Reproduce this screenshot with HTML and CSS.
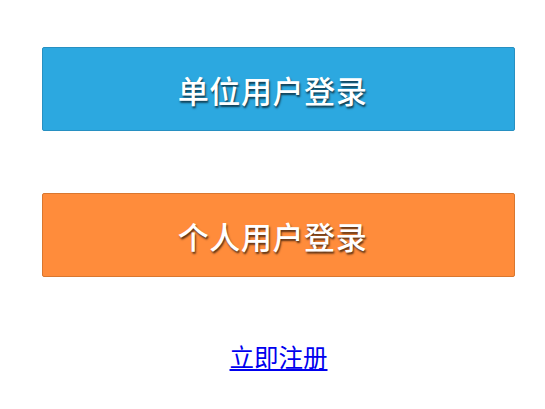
FILE: index.html
```html
<!DOCTYPE html>
<html lang="zh">
<head>
<meta charset="utf-8">
<link rel="stylesheet" href="styles.css">
</head>
<body>
<div class="page">
  <a class="btn btn-blue" href="#">单位用户登录</a>
  <a class="btn btn-orange" href="#">个人用户登录</a>
  <div class="reg"><a href="#">立即注册</a></div>
</div>
</body>
</html>
```
FILE: styles.css
```css
html, body { margin: 0; padding: 0; background: #fff; }
.page {
  display: flex;
  flex-direction: column;
  padding: 47px 30px 0 42px;
  font-family: "Noto Sans CJK SC", "Noto Sans", sans-serif;
}
.btn {
  display: flex;
  align-items: center;
  justify-content: center;
  height: 82px;
  padding-right: 12px;
  border-radius: 2px;
  color: #fff;
  font-size: 31px;
  font-weight: 500;
  letter-spacing: 0.6px;
  text-decoration: none;
  text-shadow: 1px 2px 2px rgba(0,0,0,0.65);
}
.btn-blue { background: #2ca8e0; border: 1px solid #2790c2; }
.btn-orange { background: #ff8c3b; border: 1px solid #d9772f; margin-top: 62px; }
.reg {
  margin-top: 62px;
  text-align: center;
  font-size: 24.5px;
}
.reg a { color: #0000ee; }
```
